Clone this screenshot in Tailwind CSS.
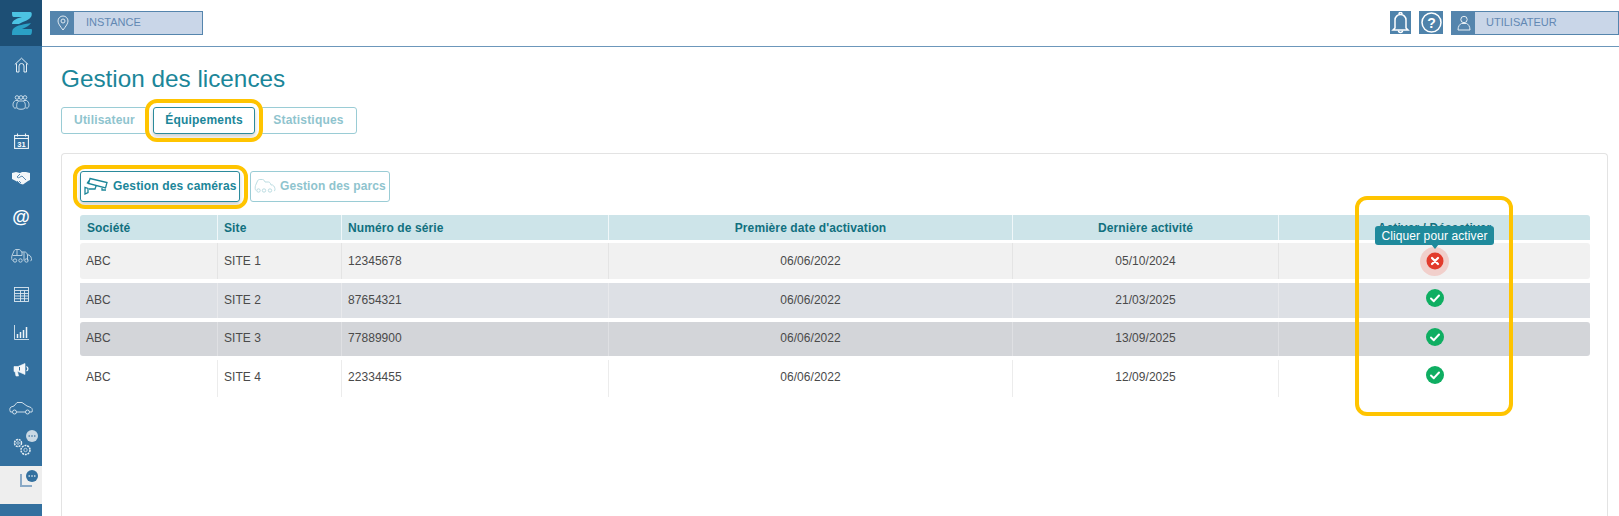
<!doctype html>
<html lang="fr">
<head>
<meta charset="utf-8">
<script src="https://cdn.jsdelivr.net/npm/@tailwindcss/browser@4"></script>
</head>
<body class="bg-white font-['Liberation_Sans',Arial,sans-serif]">
<div class="relative flex h-[516px] w-[1619px] overflow-hidden">
  <!-- Sidebar -->
  <aside class="flex w-[42px] shrink-0 flex-col bg-[#33709f] text-white">
    <div class="flex h-[46px] items-center justify-center bg-[#1d4f75]">
      <svg width="21" height="23" viewBox="0 0 21 23"><path d="M1 0h18c2 0 2 2 1.500 4C19 8 13 9 8 12H1C1 8 7 6 11 5H3C1 5 1 3 1 0z" fill="#4cc3e3"/><path d="M1 23h18c1.500 0 2-2 2-5 0-1-.5-1-1.500-1H11C15 15 18 14 20 11 15 12 5 13 2 17c-1 1.500-1 4-1 6z" fill="#2ba1c6"/></svg>
    </div>
    <div class="flex flex-col items-center pt-[9px]">
      <div class="flex h-[20px] items-center justify-center">
        <svg width="15" height="16" viewBox="0 0 15 16" fill="none" stroke="#e4eef5" stroke-width="1"><path d="M.8 7.500 7.500 1.200l6.700 6.300M2.500 6.500V15h2.500V9a2.500 2.500 0 0 1 5 0v6h2.500V6.500"/></svg>
      </div>
      <div class="mt-[17px] flex h-[20px] items-center justify-center">
        <svg width="18" height="15" viewBox="0 0 18 15" fill="none" stroke="#d7e5ef" stroke-width=".9"><circle cx="5" cy="2.500" r="1.800"/><circle cx="9" cy="2.500" r="1.800"/><circle cx="13" cy="2.500" r="1.800"/><path d="M4.500 13H2.500C.5 12 .2 7 3.500 5.500h3M13.500 13h2c2-1 2.300-6-1-7.500h-3"/><path d="M5.500 13.500C4 12 4.500 6.500 7 6h4c2.500.5 3 6 1.500 7.500-1 1-6 1-7 0z"/></svg>
      </div>
      <div class="mt-[19px] flex h-[20px] items-center justify-center">
        <svg width="15" height="16" viewBox="0 0 15 16" fill="none" stroke="#eef4f8" stroke-width="1.100"><rect x=".6" y="2.500" width="13.800" height="12.900"/><path d="M.6 5.500h13.800M3.500 .5v3M11.500 .5v3"/><text x="7.500" y="13.500" text-anchor="middle" font-size="7.500" font-weight="700" fill="#fff" stroke="none" font-family="Liberation Sans">31</text></svg>
      </div>
      <div class="mt-[17px] flex h-[20px] items-center justify-center">
        <svg width="18" height="14" viewBox="0 0 18 14"><path d="M0 2 4 1l4 1 2-1 4 0 4 1v7l-2 1-5 3.500-2-.5L3 9.500 0 8z" fill="#f2f6f9"/><path d="M8 3 5 6c1 1 2 1 3 0l2-1 4 4M7 12l-2-2M9 12 7 10" fill="none" stroke="#33709f" stroke-width=".8"/></svg>
      </div>
      <div class="mt-[19px] flex h-[20px] items-center justify-center text-[18px] leading-none font-bold">@</div>
      <div class="mt-[19px] flex h-[20px] items-center justify-center">
        <svg width="21" height="14" viewBox="0 0 21 14" fill="none" stroke="#c8dbe8" stroke-width=".9"><path d="M1.500 11.500C.5 11 .5 8 1 6.500L3 2c.5-1 1-1.500 2-1.500h3c1 0 2 1 2.500 2.500H14c1 0 2 1 2.500 3h1.500c2 1 2.500 3 2.500 5 0 .5-.5.800-1 .8"/><path d="M6 1v5M1.500 6.500h9.500V3M13 3.500v8M16.500 6v5.500"/><circle cx="4" cy="11.500" r="1.700"/><circle cx="9.500" cy="11.500" r="1.700"/><circle cx="15.500" cy="11.500" r="1.700"/></svg>
      </div>
      <div class="mt-[18px] flex h-[20px] items-center justify-center">
        <svg width="15" height="15" viewBox="0 0 15 15" fill="none" stroke="#dce8f0" stroke-width=".9"><rect x=".5" y=".5" width="14" height="14"/><path d="M.5 3.500h14M.5 6.500h14M.5 9h14M.5 11.700h14M6.500 3.500v11M10.500 3.500v11"/></svg>
      </div>
      <div class="mt-[18px] flex h-[20px] items-center justify-center">
        <svg width="15" height="15" viewBox="0 0 15 15" fill="none" stroke="#eef4f8"><path d="M.5 0v14.500H15" stroke-width=".8"/><path d="M3.500 13V9M6.500 13V7M9.500 13V5M12.500 13V2" stroke-width="1.500"/></svg>
      </div>
      <div class="mt-[18px] flex h-[20px] items-center justify-center">
        <svg width="16" height="14" viewBox="0 0 16 14"><path d="M1 3.500h4L12 .5v11L5 8.500H4.500l1 4.500H3L2 8.500H1z" fill="#f2f6f9" stroke="#f2f6f9" stroke-width=".6"/><path d="M6.500 4v3.500" stroke="#33709f"/><path d="M13.500 3.500a2.500 2.500 0 0 1 0 4.500" stroke="#f2f6f9" fill="none" stroke-width="1.300"/></svg>
      </div>
      <div class="mt-[18px] flex h-[20px] items-center justify-center">
        <svg width="24" height="14" viewBox="0 0 24 14" fill="none" stroke="#dce8f0" stroke-width=".9"><path d="M3 11H1.500C.5 9 .5 7 2 6l3-1 3-3.500h5L18 5l4 1.500c1.500 1 1.500 3 1 4.500h-2M7.500 11h9"/><circle cx="5.500" cy="11" r="2"/><circle cx="18.500" cy="11" r="2"/></svg>
      </div>
      <div class="relative mt-[17px] flex h-[20px] w-full items-center justify-center">
        <svg width="19" height="20" viewBox="0 0 19 20" fill="none" stroke="#e4eef5" class="ml-[2px] mt-[4px]"><circle cx="5" cy="6" r="3.500" stroke-width="1.500" stroke-dasharray="2 .8"/><circle cx="5" cy="6" r="1.300" stroke-width=".7"/><circle cx="12.500" cy="13" r="4.500" stroke-width="1.500" stroke-dasharray="2 .8"/><circle cx="12.500" cy="13" r="1.700" stroke-width=".7"/></svg>
        <svg width="12" height="12" viewBox="0 0 12 12" class="absolute top-[-5px] right-[4px]"><circle cx="6" cy="6" r="6" fill="#c9d8e4"/><circle cx="3.200" cy="6" r=".8" fill="#2f6b9a"/><circle cx="6" cy="6" r=".8" fill="#2f6b9a"/><circle cx="8.800" cy="6" r=".8" fill="#2f6b9a"/></svg>
      </div>
    </div>
    <div class="relative mt-[11px] h-[38px] bg-[#eeeeee]">
      <div class="absolute top-[8px] left-[20px] h-[13px] w-[12px] border-b-2 border-l-2 border-[#8aa9c6]"></div>
      <svg width="12" height="12" viewBox="0 0 12 12" class="absolute top-[4px] right-[4px]"><circle cx="6" cy="6" r="6" fill="#33709f"/><circle cx="3.200" cy="6" r=".8" fill="#fff"/><circle cx="6" cy="6" r=".8" fill="#fff"/><circle cx="8.800" cy="6" r=".8" fill="#fff"/></svg>
    </div>
  </aside>

  <div class="flex min-w-0 flex-1 flex-col">
    <!-- Top bar -->
    <header class="flex h-[47px] shrink-0 items-center justify-between border-b border-[#6c97bb] pb-[1px] pl-[8px]">
      <div class="flex h-[24px] w-[153px] items-stretch border border-[#5585ad] bg-[#c9d6e8]">
        <div class="flex w-[23px] items-center justify-center bg-[#5585ad]">
          <svg width="12" height="16" viewBox="0 0 12 16" fill="none" stroke="#dfe9f1" stroke-width="1"><path d="M6 15C3 11 1 8.500 1 6a5 5 0 0 1 10 0c0 2.500-2 5-5 9z"/><circle cx="6" cy="6" r="2"/></svg>
        </div>
        <span class="flex items-center pl-[12px] text-[11px] text-[#6288b3]">INSTANCE</span>
      </div>
      <div class="flex items-center">
        <div class="flex h-[23px] w-[21px] items-center justify-center bg-[#4f83ab]">
          <svg width="19" height="22" viewBox="0 0 19 22" fill="none" stroke="#fff" stroke-width="1.500"><path d="M4 16V8a5.500 5.500 0 0 1 11 0v8l2 2H2z"/><path d="M8 2a1.500 1.500 0 0 1 3 0M7.500 18.500a2 2 0 0 0 4 0"/></svg>
        </div>
        <div class="ml-[8px] flex h-[23px] w-[24px] items-center justify-center bg-[#4f83ab]">
          <svg width="21" height="21" viewBox="0 0 21 21" fill="none" stroke="#fff"><circle cx="10.500" cy="10.500" r="9.500" stroke-width="1.500"/><text x="10.500" y="15.500" text-anchor="middle" font-size="14" font-weight="700" fill="#fff" stroke="none" font-family="Liberation Sans">?</text></svg>
        </div>
        <div class="ml-[8px] flex h-[24px] w-[168px] items-stretch border border-[#5585ad] bg-[#c9d6e8]">
          <div class="flex w-[23px] items-center justify-center bg-[#5585ad]">
            <svg width="14" height="16" viewBox="0 0 14 16" fill="none" stroke="#e6eef4" stroke-width="1"><circle cx="7" cy="4.500" r="3.200"/><path d="M1 15c0-4 2-6 3.500-6.500h5C11 9 13 11 13 15z"/></svg>
          </div>
          <span class="flex items-center pl-[11px] text-[11px] text-[#6288b3]">UTILISATEUR</span>
        </div>
      </div>
    </header>

    <main class="flex min-h-0 flex-1 flex-col pr-[11px] pl-[19px]">
      <h1 class="mt-[18px] text-[24.3px] leading-[28px] font-normal text-[#1b8699]">Gestion des licences</h1>
      <nav class="mt-[14px] flex items-start gap-[5px] text-[12px] font-bold tracking-[.2px]">
        <span class="flex h-[27px] w-[87px] items-center justify-center rounded-[3px] border border-[#9accd5] pb-[1px] text-[#8fc4ce]">Utilisateur</span>
        <span class="flex h-[27px] w-[102px] items-center justify-center rounded-[3px] border border-[#2b8a9c] pb-[1px] text-[#1b8699] shadow-[0_3px_4px_rgba(0,0,0,.18)]">Équipements</span>
        <span class="flex h-[27px] w-[97px] items-center justify-center rounded-[3px] border border-[#9accd5] pb-[1px] text-[#8fc4ce]">Statistiques</span>
      </nav>

      <section class="mt-[19px] min-h-0 flex-1 rounded-t-[4px] border border-b-0 border-[#e3e3e3] pt-[17px] pr-[17px] pl-[18px]">
        <div class="flex items-start gap-[10px] text-[12px] font-bold">
          <span class="flex h-[31px] w-[160px] items-center gap-[4px] whitespace-nowrap rounded-[3px] border border-[#2b8a9c] pb-[1px] pl-[3px] tracking-[.15px] text-[#1b8699] shadow-[0_3px_4px_rgba(0,0,0,.18)]">
            <svg width="25" height="18" viewBox="0 0 25 18" fill="none" stroke="#1b8699" stroke-width="1.300"><path d="M6 1.500l17 4-1.500 5.500L4.500 6.500zM5 3.500 3 6.500M18 11v2h4M12 9l-1 3H5M1 17V10.500l3 1v4z"/></svg>
            Gestion des caméras
          </span>
          <span class="flex h-[31px] w-[140px] items-center gap-[3px] whitespace-nowrap rounded-[3px] border border-[#9accd5] pb-[1px] pl-[2px] tracking-[.1px] text-[#8fc4ce]">
            <svg width="24" height="14" viewBox="0 0 21 14" fill="none" stroke="#b5d9df" stroke-width=".9"><path d="M1.500 11.500C.5 11 .5 8 1 6.500L3 2c.5-1 1-1.500 2-1.500h3c1 0 2 1 2.500 2.500H14c1 0 2 1 2.500 3h1.500c2 1 2.500 3 2.500 5 0 .5-.5.800-1 .8"/><circle cx="4" cy="11.500" r="1.700"/><circle cx="9.500" cy="11.500" r="1.700"/><circle cx="15.500" cy="11.500" r="1.700"/></svg>
            Gestion des parcs
          </span>
        </div>

        <div class="mt-[13px] w-[1510px] text-[12px] tracking-[.05px] text-[#4a4a4a]">
          <div class="grid h-[25px] grid-cols-[138px_124px_267px_404px_266px_311px] items-center rounded-t-[3px] bg-[#cde4e9] font-bold tracking-[.1px] text-[#11707f]">
            <div class="flex h-full items-center border-r border-white/70 pl-[7px]">Société</div>
            <div class="flex h-full items-center border-r border-white/70 pl-[6px]">Site</div>
            <div class="flex h-full items-center border-r border-white/70 pl-[6px]">Numéro de série</div>
            <div class="flex h-full items-center justify-center border-r border-white/70">Première date d'activation</div>
            <div class="flex h-full items-center justify-center border-r border-white/70">Dernière activité</div>
            <div class="flex h-full items-center justify-center">Activer / Désactiver</div>
          </div>
          <div class="mt-[3px] grid h-[36px] grid-cols-[138px_124px_267px_404px_266px_311px] rounded-[3px] bg-[#f1f1f1]">
            <div class="flex items-center border-r border-[#e4e4e4] pl-[6px]">ABC</div>
            <div class="flex items-center border-r border-[#e4e4e4] pl-[6px]">SITE 1</div>
            <div class="flex items-center border-r border-[#e4e4e4] pl-[6px]">12345678</div>
            <div class="flex items-center justify-center border-r border-[#e4e4e4]">06/06/2022</div>
            <div class="flex items-center justify-center border-r border-[#e4e4e4]">05/10/2024</div>
            <div class="flex items-center justify-center">
              <span class="flex h-[29px] w-[29px] items-center justify-center rounded-full bg-[#f1cfcb]">
                <svg width="18" height="18" viewBox="0 0 18 18"><circle cx="9" cy="9" r="8.500" fill="#e23b2c"/><path d="M6 6l6 6M12 6l-6 6" stroke="#fff" stroke-width="2.200" stroke-linecap="round"/></svg>
              </span>
            </div>
          </div>
          <div class="mt-[4px] grid h-[35px] grid-cols-[138px_124px_267px_404px_266px_311px] bg-[#dde0e5]">
            <div class="flex items-center border-r border-[#e8e9ec] pb-[2px] pl-[6px]">ABC</div>
            <div class="flex items-center border-r border-[#e8e9ec] pb-[2px] pl-[6px]">SITE 2</div>
            <div class="flex items-center border-r border-[#e8e9ec] pb-[2px] pl-[6px]">87654321</div>
            <div class="flex items-center justify-center border-r border-[#e8e9ec] pb-[2px]">06/06/2022</div>
            <div class="flex items-center justify-center border-r border-[#e8e9ec] pb-[2px]">21/03/2025</div>
            <div class="flex items-start justify-center pt-[6px]">
              <svg width="18" height="18" viewBox="0 0 18 18"><circle cx="9" cy="9" r="9" fill="#0fae62"/><path d="M5 9.500l2.800 2.700L13 6.500" fill="none" stroke="#fff" stroke-width="2" stroke-linecap="round" stroke-linejoin="round"/></svg>
            </div>
          </div>
          <div class="mt-[4px] grid h-[34px] grid-cols-[138px_124px_267px_404px_266px_311px] rounded-[3px] bg-[#d3d5d9]">
            <div class="flex items-center border-r border-[#dfe0e3] pb-[2px] pl-[6px]">ABC</div>
            <div class="flex items-center border-r border-[#dfe0e3] pb-[2px] pl-[6px]">SITE 3</div>
            <div class="flex items-center border-r border-[#dfe0e3] pb-[2px] pl-[6px]">77889900</div>
            <div class="flex items-center justify-center border-r border-[#dfe0e3] pb-[2px]">06/06/2022</div>
            <div class="flex items-center justify-center border-r border-[#dfe0e3] pb-[2px]">13/09/2025</div>
            <div class="flex items-start justify-center pt-[6px]">
              <svg width="18" height="18" viewBox="0 0 18 18"><circle cx="9" cy="9" r="9" fill="#0fae62"/><path d="M5 9.500l2.800 2.700L13 6.500" fill="none" stroke="#fff" stroke-width="2" stroke-linecap="round" stroke-linejoin="round"/></svg>
            </div>
          </div>
          <div class="mt-[4px] grid h-[37px] grid-cols-[138px_124px_267px_404px_266px_311px] bg-white">
            <div class="flex items-center border-r border-[#ececec] pb-[3px] pl-[6px]">ABC</div>
            <div class="flex items-center border-r border-[#ececec] pb-[3px] pl-[6px]">SITE 4</div>
            <div class="flex items-center border-r border-[#ececec] pb-[3px] pl-[6px]">22334455</div>
            <div class="flex items-center justify-center border-r border-[#ececec] pb-[3px]">06/06/2022</div>
            <div class="flex items-center justify-center border-r border-[#ececec] pb-[3px]">12/09/2025</div>
            <div class="flex items-start justify-center pt-[6px]">
              <svg width="18" height="18" viewBox="0 0 18 18"><circle cx="9" cy="9" r="9" fill="#0fae62"/><path d="M5 9.500l2.800 2.700L13 6.500" fill="none" stroke="#fff" stroke-width="2" stroke-linecap="round" stroke-linejoin="round"/></svg>
            </div>
          </div>
        </div>
      </section>
    </main>
  </div>

  <!-- Tooltip over the table -->
  <div class="absolute top-[226px] left-[1375px] flex h-[19px] w-[119px] items-center justify-center rounded-[3px] bg-[#1f8a9c] text-[12px] tracking-[.1px] text-white">
    Cliquer pour activer
    <span class="absolute top-[18px] left-[56px] h-0 w-0 border-x-[4px] border-t-[5px] border-x-transparent border-t-[#1f8a9c]"></span>
  </div>

  <!-- Yellow annotation frames -->
  <div class="pointer-events-none absolute top-[99px] left-[145px] h-[43px] w-[118px] rounded-[12px] border-4 border-[#ffc400]"></div>
  <div class="pointer-events-none absolute top-[165px] left-[73px] h-[44px] w-[175px] rounded-[12px] border-4 border-[#ffc400]"></div>
  <div class="pointer-events-none absolute top-[196px] left-[1355px] h-[220px] w-[158px] rounded-[12px] border-4 border-[#ffc400]"></div>
</div>
</body>
</html>
